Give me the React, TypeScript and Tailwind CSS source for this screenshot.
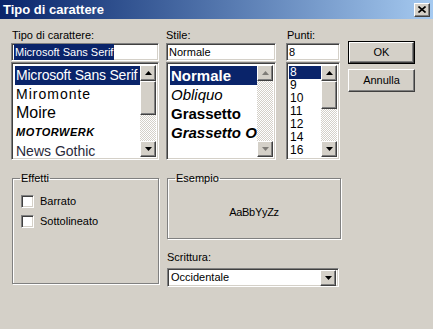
import type React from "react"

const raised =
  "border border-t-white border-l-white border-r-[#404040] border-b-[#404040] shadow-[inset_-1px_-1px_0_#808080] bg-[#d4d0c8]"
const sunken =
  "border border-t-[#808080] border-l-[#808080] border-r-white border-b-white shadow-[inset_1px_1px_0_#404040,inset_-1px_-1px_0_#d4d0c8] bg-white"
const track = "bg-[repeating-conic-gradient(#d4d0c8_0_25%,#fff_0_50%)] bg-[length:2px_2px]"

const fonts: { name: string; cls: string }[] = [
  { name: "Microsoft Sans Serif", cls: "text-[14px] tracking-[-0.2px]" },
  { name: "Miromonte", cls: "text-[14px] tracking-[1px]" },
  { name: "Moire", cls: "text-[16px]" },
  { name: "MOTORWERK", cls: "text-[11px] font-bold italic tracking-[0.5px]" },
  { name: "News Gothic", cls: "text-[14px] text-[#2a2a3a]" },
]

const styles: { name: string; cls: string }[] = [
  { name: "Normale", cls: "font-bold" },
  { name: "Obliquo", cls: "italic" },
  { name: "Grassetto", cls: "font-bold" },
  { name: "Grassetto Obliquo", cls: "font-bold italic" },
]

const sizes = ["8", "9", "10", "11", "12", "14", "16"]

function Arrow({ up, disabled }: { up?: boolean; disabled?: boolean }) {
  return (
    <svg width="7" height="4" viewBox="0 0 7 4" className={disabled ? "opacity-40" : ""}>
      <path d={up ? "M3.5 0 L7 4 L0 4 Z" : "M0 0 L7 0 L3.5 4 Z"} fill="#000" />
    </svg>
  )
}

function ScrollBtn({ up, disabled }: { up?: boolean; disabled?: boolean }) {
  return (
    <div className={`${raised} w-[16px] h-[16px] flex items-center justify-center shrink-0`}>
      <Arrow up={up} disabled={disabled} />
    </div>
  )
}

function Scrollbar({ thumb, disabled }: { thumb?: number; disabled?: boolean }) {
  return (
    <div className="w-[16px] h-full flex flex-col shrink-0">
      <ScrollBtn up disabled={disabled} />
      <div className={`flex-1 flex flex-col ${track}`}>
        {thumb ? <div className={`${raised} w-[16px] shrink-0`} style={{ height: thumb }} /> : null}
      </div>
      <ScrollBtn disabled={disabled} />
    </div>
  )
}

function Label({ children, className = "" }: { children: React.ReactNode; className?: string }) {
  return <div className={`h-[14px] leading-[13px] text-[11px] text-black ${className}`}>{children}</div>
}

function Field({ children, highlight }: { children: React.ReactNode; highlight?: boolean }) {
  return (
    <div className={`${sunken} h-[18px] flex items-center pl-[2px] text-[11px]`}>
      <span className={highlight ? "bg-[#0a246a] text-white px-[1px]" : ""}>{children}</span>
    </div>
  )
}

export default function App() {
  return (
    <div
      className="w-[433px] h-[329px] bg-[#d4d0c8] overflow-hidden text-black"
      style={{ fontFamily: "'Liberation Sans', Arial, sans-serif" }}
    >
      {/* title bar */}
      <div className="h-[19px] flex items-center justify-between pl-[3px] pr-[3px] bg-gradient-to-r from-[#0a246a] to-[#a6caf0]">
        <span className="text-white font-bold text-[13px] leading-none">Tipo di carattere</span>
        <div className={`${raised} w-[16px] h-[14px] flex items-center justify-center`}>
          <svg width="8" height="7" viewBox="0 0 8 7">
            <path d="M0.5 0.5 L7.5 6.5 M7.5 0.5 L0.5 6.5" stroke="#000" strokeWidth="1.6" />
          </svg>
        </div>
      </div>

      {/* top row */}
      <div className="flex pl-[11px] pt-[10px]">
        <div className="w-[148px] flex flex-col">
          <Label className="pl-[1px]">Tipo di carattere:</Label>
          <Field highlight>Microsoft Sans Serif</Field>
          <div className={`${sunken} mt-[1px] h-[98px] flex p-[2px]`}>
            <div className="flex-1 overflow-hidden pl-[1px] pt-[1px]">
              {fonts.map((f, i) => (
                <div
                  key={f.name}
                  className={`h-[19px] leading-[18px] whitespace-nowrap pl-[1px] ${f.cls} ${
                    i === 0 ? "bg-[#0a246a] text-white" : ""
                  }`}
                >
                  {f.name}
                </div>
              ))}
            </div>
            <Scrollbar thumb={34} />
          </div>
        </div>

        <div className="w-[110px] ml-[7px] flex flex-col">
          <Label>Stile:</Label>
          <Field>Normale</Field>
          <div className={`${sunken} mt-[1px] h-[98px] flex p-[2px]`}>
            <div className="flex-1 overflow-hidden pl-[1px] pt-[1px]">
              {styles.map((s, i) => (
                <div
                  key={s.name}
                  className={`h-[19px] leading-[19px] whitespace-nowrap pl-[1px] text-[15px] ${s.cls} ${
                    i === 0 ? "bg-[#0a246a] text-white" : ""
                  }`}
                >
                  {s.name}
                </div>
              ))}
            </div>
            <Scrollbar disabled />
          </div>
        </div>

        <div className="w-[54px] ml-[10px] flex flex-col">
          <Label className="pl-[1px]">Punti:</Label>
          <Field>8</Field>
          <div className={`${sunken} mt-[1px] h-[98px] flex p-[2px]`}>
            <div className="flex-1 overflow-hidden pt-[1px]">
              {sizes.map((s, i) => (
                <div
                  key={s}
                  className={`h-[13px] leading-[13px] pl-[1px] text-[12px] ${
                    i === 0 ? "bg-[#0a246a] text-white" : ""
                  }`}
                >
                  {s}
                </div>
              ))}
            </div>
            <Scrollbar thumb={28} />
          </div>
        </div>

        <div className="w-[67px] ml-[8px] pt-[12px] flex flex-col gap-[5px]">
          <div className="border border-black">
            <div className={`${raised} h-[21px] flex items-center justify-center text-[11px]`}>OK</div>
          </div>
          <div className={`${raised} h-[23px] flex items-center justify-center text-[11px]`}>Annulla</div>
        </div>
      </div>

      {/* bottom row */}
      <div className="flex pl-[12px] mt-[12px]">
        <fieldset className="w-[147px] h-[112px] border border-[#808080] shadow-[1px_1px_0_#fff,inset_1px_1px_0_#fff] pl-[8px]">
          <legend className="text-[11px] leading-[13px] px-[1px] ml-[-1px]">Effetti</legend>
          <div className="flex flex-col gap-[7px] mt-[10px]">
            {["Barrato", "Sottolineato"].map((t) => (
              <div key={t} className="flex items-center h-[13px]">
                <div className={`${sunken} w-[13px] h-[13px] shrink-0`} />
                <span className="ml-[6px] text-[11px]">{t}</span>
              </div>
            ))}
          </div>
        </fieldset>

        <div className="w-[174px] ml-[8px] flex flex-col">
          <fieldset className="h-[67px] border border-[#808080] shadow-[1px_1px_0_#fff,inset_1px_1px_0_#fff] pl-[7px]">
            <legend className="text-[11px] leading-[13px] px-[1px]">Esempio</legend>
            <div className="h-[50px] pt-[4px] flex items-center justify-center pr-[7px] text-[11px] tracking-[-0.3px]">
              AaBbYyZz
            </div>
          </fieldset>
          <Label className="mt-[12px] h-[16px]">Scrittura:</Label>
          <div className={`${sunken} w-[172px] h-[19px] flex items-center p-[2px] mt-[1px]`}>
            <span className="flex-1 pl-[1px] text-[11px]">Occidentale</span>
            <ScrollBtn />
          </div>
        </div>
      </div>
    </div>
  )
}
